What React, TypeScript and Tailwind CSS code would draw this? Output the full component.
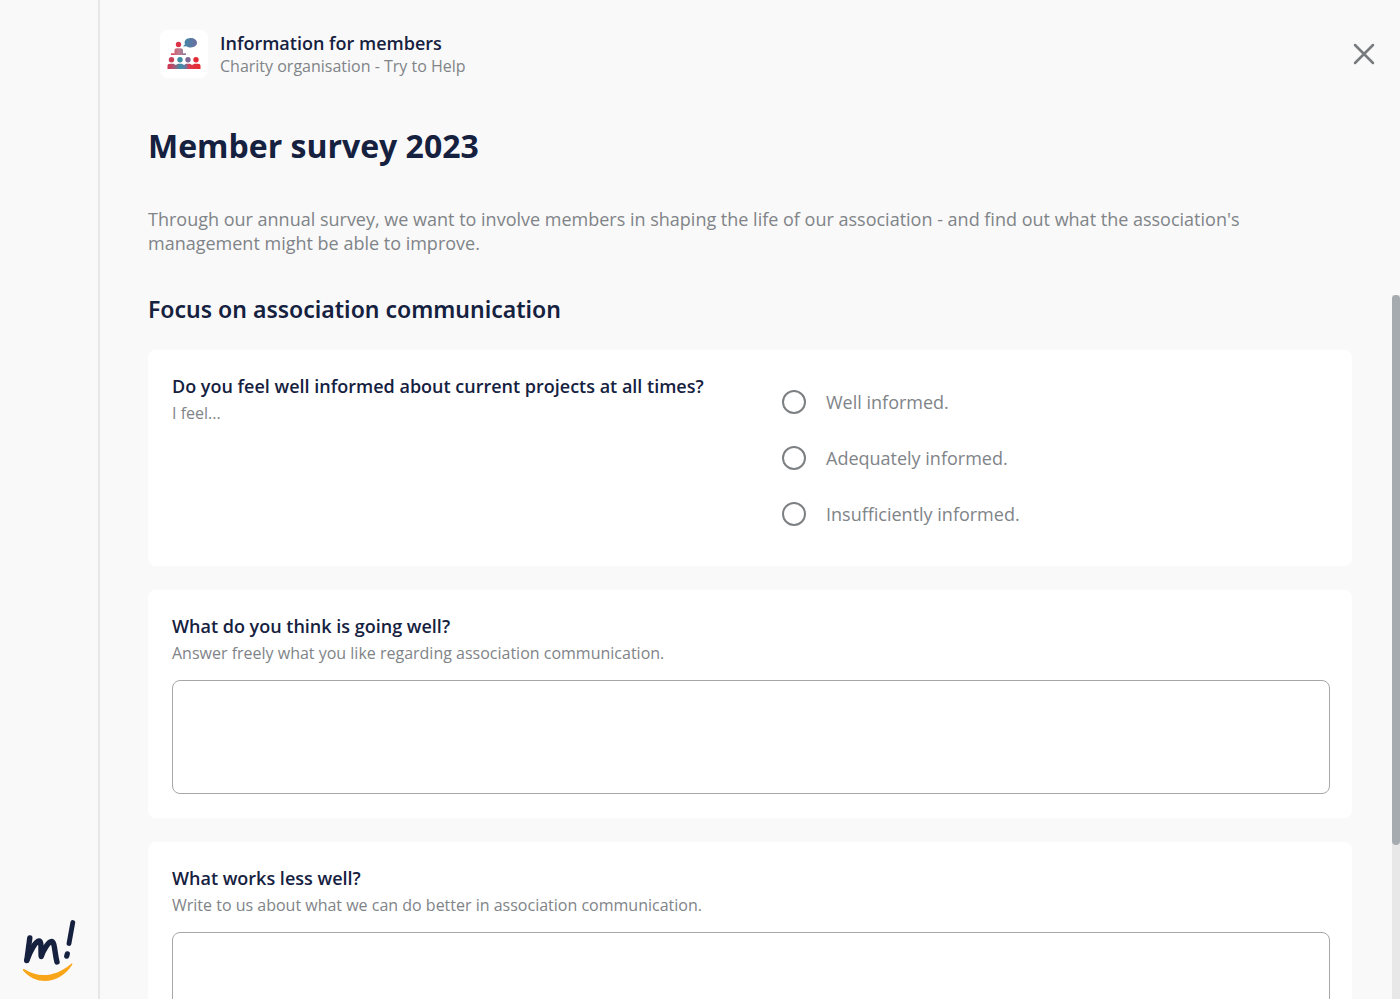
import React from "react";

type CardProps = { title: string; hint: string; id: string };

function Logo() {
  return (
    <svg width="60" height="68" viewBox="0 0 60 68" fill="none" aria-label="m!" role="img">
      <g stroke="#15213f" strokeWidth="5.4" strokeLinecap="round" strokeLinejoin="round">
        <path d="M9.800 23 6.800 45.500" />
        <path d="M7 45C10.500 35.500 15.500 26.500 19 26C22 26 20.500 34.500 21.200 41.500C23.500 35 28.500 26.500 31.500 26.500C35 26.500 34.500 38 37 47" />
        <path d="M52.800 7.500 49 28.500" strokeWidth="4.800" />
        <path d="M47.300 38.800 46.700 41.200" strokeWidth="5.200" />
      </g>
      <path d="M4.500 54.300C18 63 35 62.500 51.300 48.700C52.300 48 52.800 48.800 52.200 49.800C39 70 16 70.500 3.500 56C2.300 54.500 3 53.400 4.500 54.300Z" fill="#f9a51a" />
    </svg>
  );
}

function MembersIcon() {
  return (
    <svg width="36" height="34" viewBox="0 0 36 34" aria-hidden="true">
      <defs>
        <linearGradient id="crowd" x1="0" x2="1">
          <stop offset="0" stopColor="#d9304a" />
          <stop offset=".2" stopColor="#a65a78" />
          <stop offset=".38" stopColor="#3c8ea6" />
          <stop offset=".52" stopColor="#5b7fa8" />
          <stop offset=".66" stopColor="#dc3a4c" />
          <stop offset="1" stopColor="#e5282f" />
        </linearGradient>
        <linearGradient id="bubble" x1="0" x2="1">
          <stop offset="0" stopColor="#3d87a8" />
          <stop offset="1" stopColor="#6d6fa0" />
        </linearGradient>
        <linearGradient id="speaker" x1="0" x2="1">
          <stop offset="0" stopColor="#de4455" />
          <stop offset=".5" stopColor="#c17c90" />
          <stop offset="1" stopColor="#8a7a9c" />
        </linearGradient>
      </defs>
      <path d="M24.500 1C28.300 1 31 3.100 31 5.800S28.300 10.500 24.800 10.500C23 10.500 21.500 10 20.500 9.200L17 9.500 19 7.200C17.500 3.800 20.500 1 24.500 1Z" fill="url(#bubble)" />
      <circle cx="12.500" cy="7.500" r="2.700" fill="#dc3348" />
      <path d="M8.500 16.300V13.500C8.500 12 9.500 11.300 11 11.300H14.500C16 11.300 17 12 17 13.500V16.300H20V18H5V16.300Z" fill="url(#speaker)" />
      <circle cx="5.500" cy="22.700" r="2.700" fill="#c93f58" />
      <circle cx="14" cy="22.700" r="2.700" fill="#3b8ca4" />
      <circle cx="22" cy="22.700" r="2.700" fill="#7d6794" />
      <circle cx="30" cy="22.700" r="2.700" fill="#e32b35" />
      <path d="M1.500 32V29C1.500 27.500 2.500 26.800 4 26.800H7.500L9.800 28 12 26.800H16L18 28 20 26.800H24L26 28 28.500 26.800H32C33.500 26.800 34.500 27.500 34.500 29V32Z" fill="url(#crowd)" />
    </svg>
  );
}

function TextCard({ title, hint, id }: CardProps) {
  return (
    <section className="flex flex-col rounded-lg bg-white pt-6 pr-[22px] pb-6 pl-6">
      <label htmlFor={id} className="text-lg leading-6 font-semibold text-[#15213f]">
        {title}
      </label>
      <p id={`${id}-hint`} className="mt-1 text-base leading-[22px] text-[#808488]">
        {hint}
      </p>
      <textarea
        id={id}
        aria-describedby={`${id}-hint`}
        className="mt-4 block h-[114px] w-full resize-none rounded-lg border border-[#a5a7aa] bg-white p-3 text-lg text-[#15213f]"
      />
    </section>
  );
}

const options = ["Well informed.", "Adequately informed.", "Insufficiently informed."];

export default function App() {
  return (
    <div className="relative flex h-screen overflow-hidden bg-[#f9f9f9] font-['Open_Sans','Noto_Sans',sans-serif]">
      <aside className="flex w-[100px] shrink-0 flex-col justify-end border-r-2 border-[#e7e7e8] pb-4 pl-5">
        <Logo />
      </aside>

      <div className="flex min-w-0 flex-1 flex-col">
        <header className="flex shrink-0 items-center pt-[30px] pr-5 pl-[60px]">
          <div className="flex size-12 shrink-0 items-center justify-center rounded-lg bg-white">
            <MembersIcon />
          </div>
          <div className="ml-3 flex-1">
            <p className="text-lg leading-6 font-semibold text-[#15213f]">Information for members</p>
            <p className="text-base leading-[22px] text-[#808488]">Charity organisation - Try to Help</p>
          </div>
          <button type="button" aria-label="Close" className="flex size-8 items-center justify-center">
            <svg width="22" height="22" viewBox="0 0 22 22" stroke="#777b7d" strokeWidth="2.500" strokeLinecap="round" aria-hidden="true">
              <path d="M2 2 20 20M20 2 2 20" />
            </svg>
          </button>
        </header>

        <main className="px-12 pt-[46px]">
          <h1 className="text-[32px] leading-[44px] font-bold text-[#15213f]">Member survey 2023</h1>
          <p className="mt-[39px] text-lg leading-6 text-[#808488]">
            Through our annual survey, we want to involve members in shaping the life of our association - and find out
            what the association's management might be able to improve.
          </p>
          <h2 className="mt-[38px] font-['Noto_Sans','Open_Sans',sans-serif] text-[23px] leading-8 font-semibold text-[#15213f]">
            Focus on association communication
          </h2>

          <form className="mt-[25px] flex flex-col gap-6">
            <fieldset className="rounded-lg bg-white px-6 py-6" aria-labelledby="informed-title">
              <div className="grid grid-cols-2">
                <div>
                  <p id="informed-title" className="text-lg leading-6 font-semibold text-[#15213f]">
                    Do you feel well informed about current projects at all times?
                  </p>
                  <p className="mt-1 text-base leading-[22px] text-[#808488]">I feel...</p>
                </div>
                <div className="pl-8">
                  {options.map((option) => (
                    <label key={option} className="flex h-14 items-center gap-5 text-lg leading-6 text-[#808488]">
                      <input
                        type="radio"
                        name="informed"
                        className="size-6 shrink-0 appearance-none rounded-full border-2 border-[#7d8082] checked:border-8"
                      />
                      {option}
                    </label>
                  ))}
                </div>
              </div>
            </fieldset>

            <TextCard
              id="going-well"
              title="What do you think is going well?"
              hint="Answer freely what you like regarding association communication."
            />
            <TextCard
              id="less-well"
              title="What works less well?"
              hint="Write to us about what we can do better in association communication."
            />
          </form>
        </main>
      </div>

      <div className="absolute top-[295px] right-0 bottom-0 w-2 bg-[#e8e8e8]" aria-hidden="true">
        <div className="h-[550px] rounded-full bg-[#a5abae]" />
      </div>
    </div>
  );
}
